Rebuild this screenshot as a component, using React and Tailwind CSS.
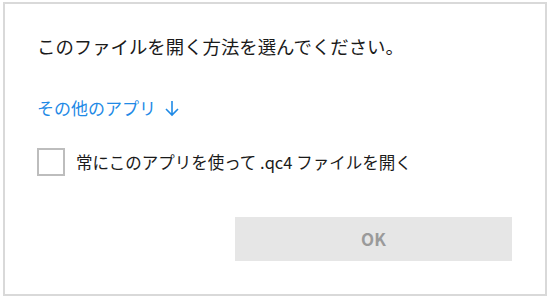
import React from "react";

export default function App() {
    return (
        <div className="w-[552px] h-[303px] bg-white pt-[2px] pl-[3px]" style={{ fontFamily: '"Noto Sans CJK JP", "Noto Sans", sans-serif' }}>
            <div className="w-[544px] h-[294px] border-2 border-[#d9d9d9] bg-white flex flex-col pt-[30px] pl-[32px] pr-[33px]">
                <h1 className="text-[18.4px] leading-[24px] text-[#1a1a1a] font-normal">このファイルを開く方法を選んでください。</h1>
                <button className="mt-[38px] self-start flex items-center text-[17px] leading-[24px] text-[#1f8ae6]">
                    <span>その他のアプリ</span>
                    <svg className="ml-[8px] w-[16px] h-[18px]" viewBox="0 0 16 18" fill="none" stroke="currentColor" strokeWidth={1.6}>
                        <path d="M8 2v14M2 10l6 6 6-6" />
                    </svg>
                </button>
                <label className="mt-[28px] flex items-center">
                    <span className="w-[28px] h-[28px] border-2 border-[#bdbdbd] bg-white shrink-0"></span>
                    <span className="ml-[11px] text-[16.5px] leading-[24px] text-[#1a1a1a]">常にこのアプリを使って .qc4 ファイルを開く</span>
                </label>
                <div className="mt-[41px] flex justify-end">
                    <button disabled className="w-[277px] h-[44px] bg-[#e6e6e6] text-[#9a9a9a] text-[17px] font-semibold">OK</button>
                </div>
            </div>
        </div>
    );
}
